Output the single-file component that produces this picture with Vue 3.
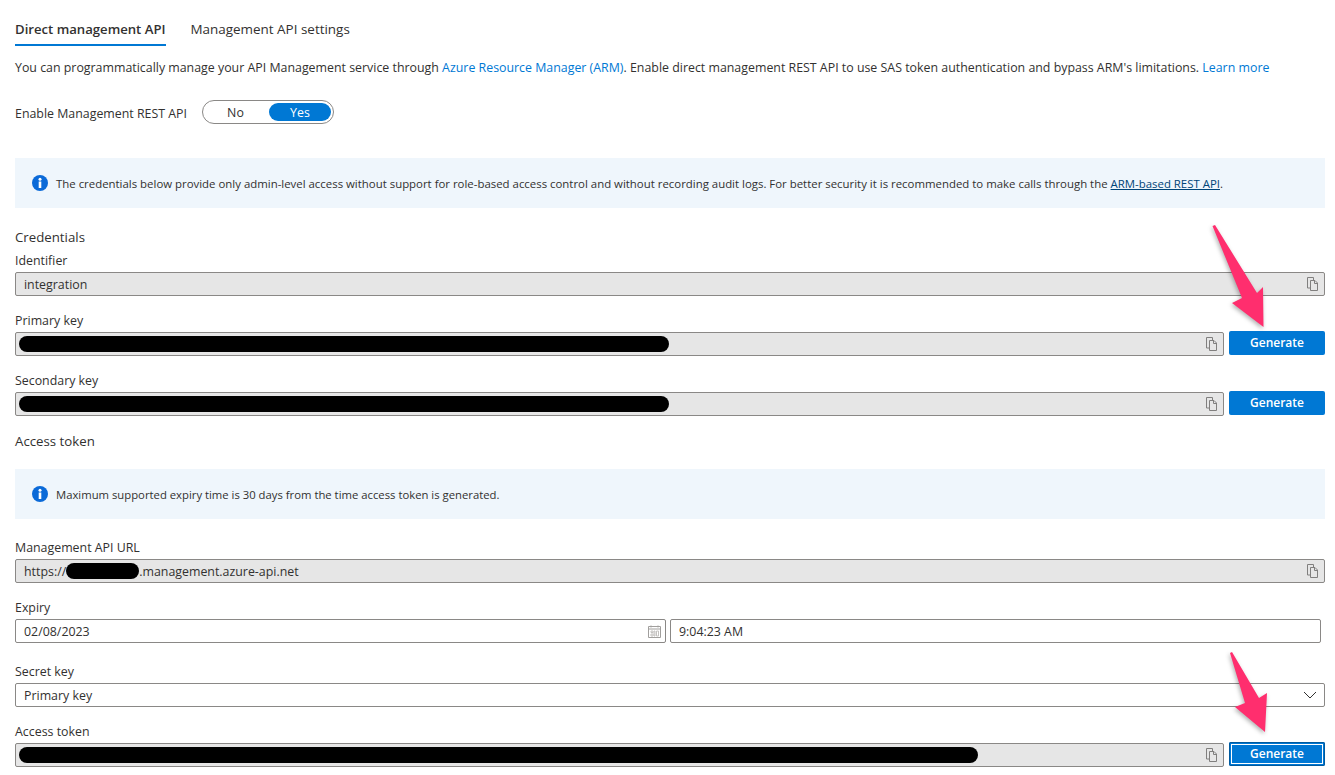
<template>
  <div class="page">

    <!-- TABS -->
    <div class="tabs">
      <div class="tab active">Direct management API</div>
      <div class="tab">Management API settings</div>
    </div>

    <p class="intro">
      You can programmatically manage your API Management service through
      <a class="link">Azure Resource Manager (ARM)</a>. Enable direct management REST API to use SAS token authentication and bypass ARM's limitations.
      <a class="link">Learn more</a>
    </p>

    <!-- TOGGLE -->
    <div class="toggle-row">
      <span class="toggle-label">Enable Management REST API</span>
      <div class="toggle">
        <span class="toggle-item">No</span>
        <span class="toggle-item on">Yes</span>
      </div>
    </div>

    <div class="info first">
      <svg class="info-icon" viewBox="0 0 16 16" width="16" height="16">
        <circle cx="8" cy="8" r="8" fill="#0b6ad8" />
        <rect x="6.700" y="6.500" width="2.600" height="6.500" fill="#fff" />
        <circle cx="8" cy="4.200" r="1.500" fill="#fff" />
      </svg>
      <span>
        The credentials below provide only admin-level access without support for role-based access control and without recording audit logs. For better security it is recommended to make calls through the
        <a class="dark-link">ARM-based REST API</a>.
      </span>
    </div>

    <!-- CREDENTIALS -->
    <h3 class="heading creds">Credentials</h3>

    <div class="field">
      <label>Identifier</label>
      <div class="input readonly">
        <span class="value">integration</span>
        <svg class="copy" viewBox="0 0 11 14" width="11" height="14">
          <path d="M3 11H.5V.5h6V3M3.500 3.500h4.500l2.500 2.500v7.500h-7zM7.500 3.500v3h3" fill="none" stroke="#807f7e" stroke-width="1" />
        </svg>
      </div>
    </div>

    <div class="field">
      <label>Primary key</label>
      <div class="row">
        <div class="input readonly">
          <span class="secret" style="width: 650px"></span>
          <svg class="copy" viewBox="0 0 11 14" width="11" height="14">
            <path d="M3 11H.5V.5h6V3M3.500 3.500h4.500l2.500 2.500v7.500h-7zM7.500 3.500v3h3" fill="none" stroke="#807f7e" stroke-width="1" />
          </svg>
        </div>
        <button class="btn">Generate</button>
      </div>
    </div>

    <div class="field">
      <label>Secondary key</label>
      <div class="row">
        <div class="input readonly">
          <span class="secret" style="width: 650px"></span>
          <svg class="copy" viewBox="0 0 11 14" width="11" height="14">
            <path d="M3 11H.5V.5h6V3M3.500 3.500h4.500l2.500 2.500v7.500h-7zM7.500 3.500v3h3" fill="none" stroke="#807f7e" stroke-width="1" />
          </svg>
        </div>
        <button class="btn">Generate</button>
      </div>
    </div>

    <!-- ACCESS TOKEN -->
    <h3 class="heading">Access token</h3>

    <div class="info second">
      <svg class="info-icon" viewBox="0 0 16 16" width="16" height="16">
        <circle cx="8" cy="8" r="8" fill="#0b6ad8" />
        <rect x="6.700" y="6.500" width="2.600" height="6.500" fill="#fff" />
        <circle cx="8" cy="4.200" r="1.500" fill="#fff" />
      </svg>
      <span class="short">Maximum supported expiry time is 30 days from the time access token is generated.</span>
    </div>

    <div class="field">
      <label>Management API URL</label>
      <div class="input readonly">
        <span class="value">https://</span>
        <span class="secret url"></span>
        <span class="value">.management.azure-api.net</span>
        <svg class="copy" viewBox="0 0 11 14" width="11" height="14">
          <path d="M3 11H.5V.5h6V3M3.500 3.500h4.500l2.500 2.500v7.500h-7zM7.500 3.500v3h3" fill="none" stroke="#807f7e" stroke-width="1" />
        </svg>
      </div>
    </div>

    <div class="field loose">
      <label>Expiry</label>
      <div class="expiry">
        <div class="input">
          <span class="value">02/08/2023</span>
          <svg class="calendar" viewBox="0 0 13 13" width="13" height="13">
            <path d="M.5 1.500h12v11H.5zM.5 4h12M3 .5v2M10 .5v2" fill="none" stroke="#a19f9d" stroke-width="1" />
            <path d="M3 6h2v1.500H3zM6 6h1v5H6zM8.500 6h2v5h-2zM3 9h2v2H3z" fill="none" stroke="#c4c2c0" stroke-width="1" />
          </svg>
        </div>
        <div class="input">
          <span class="value">9:04:23 AM</span>
        </div>
      </div>
    </div>

    <div class="field">
      <label>Secret key</label>
      <div class="input">
        <span class="value">Primary key</span>
        <svg class="chevron" viewBox="0 0 14 8" width="14" height="8">
          <path d="M1 1l6 6 6-6" fill="none" stroke="#323130" stroke-width="1" />
        </svg>
      </div>
    </div>

    <div class="field">
      <label>Access token</label>
      <div class="row">
        <div class="input readonly">
          <span class="secret" style="width: 959px"></span>
          <svg class="copy" viewBox="0 0 11 14" width="11" height="14">
            <path d="M3 11H.5V.5h6V3M3.500 3.500h4.500l2.500 2.500v7.500h-7zM7.500 3.500v3h3" fill="none" stroke="#807f7e" stroke-width="1" />
          </svg>
        </div>
        <button class="btn focused">Generate</button>
      </div>
    </div>

    <!-- ANNOTATION ARROWS -->
    <svg class="arrows" viewBox="0 0 1335 775" width="1335" height="775">
      <path d="M1212.500 226L1215 225L1257 293L1263 287L1263.500 327L1232 303L1242 298Z" fill="#ff2e6e" />
      <path d="M1230 653L1232 652L1259 698L1267 693L1265 732L1235 707L1245 703Z" fill="#ff2e6e" />
    </svg>

  </div>
</template>

<script setup>
</script>

<style>
body {
  background: #fff;
}
</style>

<style scoped>
.page {
  position: relative;
  width: 1335px;
  height: 775px;
  box-sizing: border-box;
  padding: 14px 10px 0 15px;
  overflow: hidden;
  background: #fff;
  color: #323130;
  font-family: "Open Sans", "Noto Sans", sans-serif;
  font-size: 12.39px;
}

/* TABS */
.tabs {
  display: flex;
  gap: 25px;
  height: 32px;
  font-size: 13.45px;
}

.tab {
  line-height: 30px;
  height: 32px;
  box-sizing: border-box;
}

.tab.active {
  font-size: 13.15px;
  font-weight: 600;
  border-bottom: 2px solid #0078d4;
}

.intro {
  margin: 12px 0 0;
  height: 20px;
  line-height: 20px;
  white-space: nowrap;
}

.link {
  color: #0078d4;
}

.dark-link {
  color: #004578;
  text-decoration: underline;
}

/* TOGGLE */
.toggle-row {
  display: flex;
  align-items: center;
  margin-top: 22px;
  height: 24px;
}

.toggle-label {
  width: 187px;
  padding-top: 2px;
}

.toggle {
  display: flex;
  box-sizing: border-box;
  width: 132px;
  height: 24px;
  padding: 2px;
  border: 1px solid #8a8886;
  border-radius: 12px;
}

.toggle-item {
  flex: 1;
  padding-right: 3px;
  text-align: center;
  line-height: 20px;
  height: 18px;
  border-radius: 10px;
}

.toggle-item.on {
  flex: none;
  width: 62px;
  padding-right: 0;
  background: #0078d4;
  color: #fff;
}

/* INFO */
.info {
  display: flex;
  align-items: center;
  gap: 8px;
  height: 50px;
  padding-left: 17px;
  background: #eff6fc;
  font-size: 11.42px;
  white-space: nowrap;
}

.info.first {
  margin-top: 34px;
}

.info.second {
  margin-top: 17px;
}

.info .short {
  font-size: 11.3px;
}

.info-icon {
  flex: none;
}

.heading {
  margin: 0;
  height: 24px;
  line-height: 26px;
  font-size: 13.25px;
  font-weight: 400;
}

.heading.creds {
  margin-top: 16px;
}

/* FIELDS */
.field {
  margin-bottom: 12px;
}

.field.loose {
  margin-bottom: 16px;
}

.info + .field {
  margin-top: 16px;
}

label {
  display: block;
  height: 24px;
  line-height: 26px;
}

.row {
  display: flex;
  gap: 5px;
}

.input {
  display: flex;
  align-items: center;
  flex: 1;
  box-sizing: border-box;
  height: 24px;
  padding: 0 8px;
  border: 1px solid #8a8886;
  border-radius: 2px;
  background: #fff;
}

.input.readonly {
  background: #e6e6e6;
}

.value {
  white-space: pre;
}

.secret {
  display: block;
  height: 16px;
  margin-left: -5px;
  border-radius: 8px;
  background: #000;
}

.secret.url {
  width: 73px;
  margin-left: 0;
}

.copy {
  margin-left: auto;
  margin-right: -2px;
}

.calendar {
  margin-left: auto;
  margin-right: -4px;
}

.chevron {
  margin-left: auto;
  margin-right: -1px;
}

.expiry {
  display: flex;
  gap: 4px;
  width: 1306px;
}

/* BUTTON */
.btn {
  box-sizing: border-box;
  width: 96px;
  height: 24px;
  margin-top: -1px;
  padding: 0 0 2px;
  border: none;
  border-radius: 2px;
  background: #0078d4;
  color: #fff;
  font-family: inherit;
  font-size: 12px;
  font-weight: 600;
}

.btn.focused {
  outline: 1px solid #fff;
  outline-offset: -3px;
  box-shadow: inset 0 0 0 1px #005a9e;
}

/* ARROWS */
.arrows {
  position: absolute;
  left: 0;
  top: 0;
  pointer-events: none;
  filter: drop-shadow(-1px 2px 2px rgba(0, 0, 0, 0.3));
}
</style>
